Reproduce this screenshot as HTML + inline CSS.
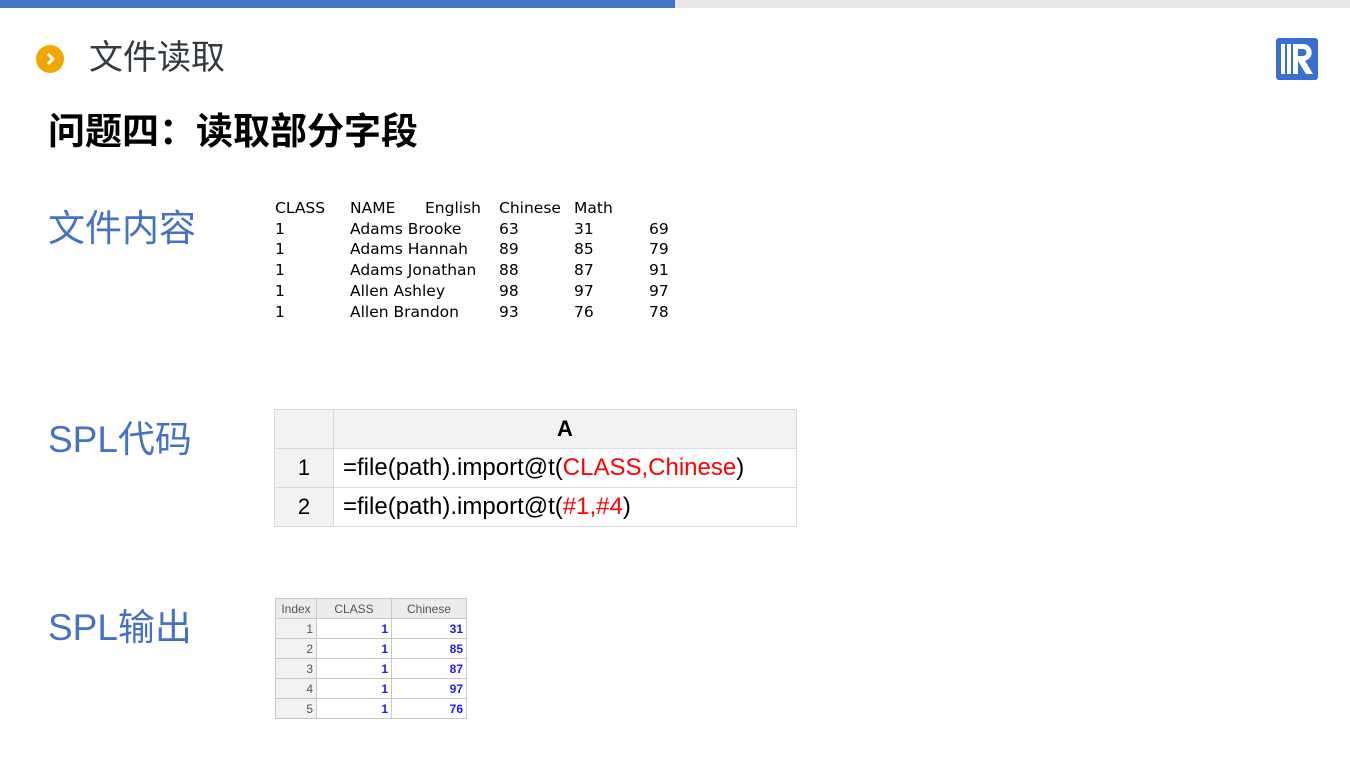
<!DOCTYPE html>
<html><head><meta charset="utf-8"><style>
body{margin:0;width:1350px;height:759px;background:#fff;position:relative;overflow:hidden;font-family:"Liberation Sans","Noto Sans CJK SC",sans-serif}
.a{position:absolute}
.lbl{position:absolute;left:48px;color:#4472c4;font-size:37px;line-height:40px}
.fc{position:absolute;color:#000;white-space:nowrap;font-family:'DejaVu Sans',sans-serif;font-size:15.5px;line-height:20.7px;top:198px}
table{border-collapse:collapse;position:absolute}
.spl td{border:1px solid #d9d9d9;height:38px;padding:0;font-size:24px}
.out td{border:1px solid #c8c8c8;height:19px;padding:0 3px;font-size:12px;text-align:right;color:#1a1aff;font-weight:bold}
</style></head><body>
<div class="a" style="left:0;top:0;width:675px;height:8px;background:#4472c4"></div>
<div class="a" style="left:675px;top:0;width:675px;height:8px;background:#e8e8e8"></div>
<div class="a" style="left:36px;top:45px;width:28px;height:28px;border-radius:50%;background:#f0a800"></div>
<svg class="a" style="left:36px;top:45px" width="28" height="28"><path d="M12 9l5 5-5 5" stroke="#fff" stroke-width="3" fill="none"/></svg>
<div class="a" style="left:89px;top:37px;font-size:34px;color:#333a40;line-height:42px">文件读取</div>
<div class="a" style="left:48px;top:110px;font-size:37px;font-weight:bold;color:#000;line-height:44px">问题四：读取部分字段</div>
<svg class="a" style="left:1276px;top:38px" width="42" height="42"><rect width="42" height="42" rx="3" fill="#3a6fd0"/><rect x="5" y="6" width="4" height="30" fill="#fff"/><rect x="11" y="6" width="4" height="30" fill="#fff"/><path d="M17 6h10a8.5 8.5 0 0 1 2 16.8l8 13.2h-7l-8-13v13h-5z" fill="#fff"/><path d="M22 11h5a3.5 3.5 0 0 1 0 7h-5z" fill="#3a6fd0"/></svg>
<div class="lbl" style="top:209px">文件内容</div>
<div class="lbl" style="top:420px">SPL代码</div>
<div class="lbl" style="top:608px">SPL输出</div>
<div class="fc" style="left:275px">CLASS<br>1<br>1<br>1<br>1<br>1</div>
<div class="fc" style="left:350px">NAME<br>Adams Brooke<br>Adams Hannah<br>Adams Jonathan<br>Allen Ashley<br>Allen Brandon</div>
<div class="fc" style="left:425px">English</div>
<div class="fc" style="left:499px">Chinese<br>63<br>89<br>88<br>98<br>93</div>
<div class="fc" style="left:574px">Math<br>31<br>85<br>87<br>97<br>76</div>
<div class="fc" style="left:649px">&nbsp;<br>69<br>79<br>91<br>97<br>78</div>
<table class="spl" style="left:274px;top:409px">
<tr><td style="width:58px;background:#f2f2f2"></td><td style="width:462px;background:#f2f2f2;text-align:center;font-weight:bold;font-size:22px">A</td></tr>
<tr><td style="background:#f2f2f2;text-align:center;font-size:22px">1</td><td style="padding-left:9px">=file(path).import@t(<span style="color:#f00">CLASS,Chinese</span>)</td></tr>
<tr><td style="background:#f2f2f2;text-align:center;font-size:22px">2</td><td style="padding-left:9px">=file(path).import@t(<span style="color:#f00">#1,#4</span>)</td></tr>
</table>
<table class="out" style="left:275px;top:598px">
<tr style="background:#ececec"><td style="width:34px;text-align:center;color:#555;font-weight:normal">Index</td><td style="width:68px;text-align:center;color:#555;font-weight:normal">CLASS</td><td style="width:68px;text-align:center;color:#555;font-weight:normal">Chinese</td></tr>
<tr><td style="background:#f2f2f2;color:#555;font-weight:normal">1</td><td>1</td><td>31</td></tr>
<tr><td style="background:#f2f2f2;color:#555;font-weight:normal">2</td><td>1</td><td>85</td></tr>
<tr><td style="background:#f2f2f2;color:#555;font-weight:normal">3</td><td>1</td><td>87</td></tr>
<tr><td style="background:#f2f2f2;color:#555;font-weight:normal">4</td><td>1</td><td>97</td></tr>
<tr><td style="background:#f2f2f2;color:#555;font-weight:normal">5</td><td>1</td><td>76</td></tr>
</table>
</body></html>
